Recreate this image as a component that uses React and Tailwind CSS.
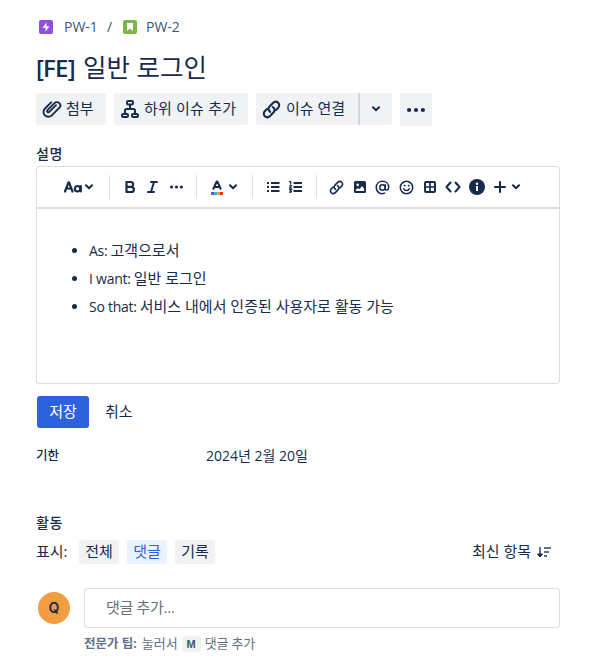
import React from "react";

const Attachment = () => (
  <svg width="20" height="20" viewBox="0 0 20 20" fill="none" stroke="currentColor" strokeWidth="1.900" strokeLinecap="round">
    <path d="M14 6.200l-6.700 6.700c-.5.500-1.300.500-1.800.100s-.5-1.300 0-1.800l7-7c1.400-1.400 3.500-1.400 4.800-.1s1.300 3.400-.1 4.800l-7.400 7.400c-2 2-5 2-6.900.1s-1.900-4.900.1-6.900l6.200-6.200" />
  </svg>
);

const ChildIssues = () => (
  <svg width="18" height="18" viewBox="0 0 18 18" fill="none" stroke="currentColor" strokeWidth="2">
    <rect x="6" y="1" width="6" height="3.500" rx="1.200" />
    <rect x="1" y="14" width="6" height="3" rx="1.200" />
    <rect x="11" y="14" width="6" height="3" rx="1.200" />
    <path d="M9 4.500V9M4 14v-3.500Q4 9 5.500 9h7q1.500 0 1.500 1.500V14" />
  </svg>
);

const LinkIcon = ({ size = 19, stroke = 2 }) => (
  <svg width={size} height={size} viewBox="0 0 18 18" fill="none" stroke="currentColor" strokeWidth={stroke} strokeLinecap="round">
    <path d="M7.700 11.200c-1.900-1.400-2-3.600-.5-5.100l3.200-3.200c1.500-1.500 3.500-1.500 4.900-.2s1.300 3.400-.1 4.800l-2 2" />
    <path d="M10.300 6.800c1.900 1.400 2 3.600.5 5.100l-3.200 3.200c-1.500 1.500-3.500 1.500-4.900.2s-1.300-3.400.1-4.800l2-2" />
  </svg>
);

const Chevron = () => (
  <svg width="10" height="6" viewBox="0 0 10 6" fill="none" stroke="currentColor" strokeWidth="2" strokeLinecap="round" strokeLinejoin="round">
    <path d="M2 1.300l3 3 3-3" />
  </svg>
);

const Dots = ({ width, r }) => (
  <svg width={width} height="6" viewBox={`0 0 ${width} 6`} fill="currentColor">
    <circle cx={r} cy="3" r={r} />
    <circle cx={width / 2} cy="3" r={r} />
    <circle cx={width - r} cy="3" r={r} />
  </svg>
);

const Divider = () => <div className="h-6 w-px shrink-0 bg-[#dcdfe4]" />;

const Toolbar = () => (
  <div className="flex h-[42px] items-center border-b-2 border-[#dddee1] pl-[26px] text-[#172b4d]">
    <span className="flex w-[46px] items-center">
      <svg width="21" height="14" viewBox="0 0 21 14" fill="none" stroke="currentColor" strokeWidth="2.200" strokeLinecap="round" strokeLinejoin="round">
        <path d="M2 11.500l3.500-9.200h.5l3.500 9.200M3.300 8.500h5" />
        <circle cx="14.500" cy="8.700" r="2.700" />
        <path d="M17.800 6v5.500" />
      </svg>
      <Chevron />
    </span>
    <Divider />
    <svg className="ml-[14px]" width="12" height="14" viewBox="0 0 12 14" fill="none" stroke="currentColor" strokeWidth="2.200" strokeLinejoin="round">
      <path d="M2.500 2h4.200c3.200 0 3.200 4.800 0 4.800H2.500zM2.500 6.800h4.700c3.600 0 3.600 5.200 0 5.200H2.500z" />
    </svg>
    <svg className="ml-[11px]" width="11" height="14" viewBox="0 0 11 14" fill="none" stroke="currentColor" strokeWidth="2" strokeLinecap="round">
      <path d="M4 2h6M1 12h6M7 2L4 12" />
    </svg>
    <span className="ml-[12px] w-[26px]">
      <Dots width={13} r={1.6} />
    </span>
    <Divider />
    <svg className="ml-[14px]" width="12" height="15" viewBox="0 0 12 15" fill="none">
      <path d="M2 9.500L5.700 1.500h.6L10 9.500M3.200 7.100h5.600" stroke="#172b4d" strokeWidth="2" strokeLinejoin="round" />
      <path d="M0 12h3v3H1q-1 0-1-1z" fill="#6554c0" />
      <path d="M3 12h3v3H3z" fill="#2abfd5" />
      <path d="M6 12h3v3H6z" fill="#ff991f" />
      <path d="M9 12h3v2q0 1-1 1H9z" fill="#de350b" />
    </svg>
    <span className="ml-[5px] w-[24px]">
      <Chevron />
    </span>
    <Divider />
    <svg className="ml-[14px]" width="13" height="12" viewBox="0 0 13 12" fill="currentColor">
      <path d="M0 1h2v2H0zM0 5h2v2H0zM0 9h2v2H0zM4 1h8.500v2H4zM4 5h8.500v2H4zM4 9h8.500v2H4z" />
    </svg>
    <svg className="ml-[9px]" width="13" height="12" viewBox="0 0 13 12" fill="none" stroke="currentColor">
      <path d="M4.500 2H13M4.500 6H13M4.500 10H13" strokeWidth="2" />
      <path d="M0 .700h1.700v3M.200 4.800h2.200L.400 7.200h2.400M.200 8.700h2.300L1.200 9.900c2 0 1.500 1.600-.9 1.600" strokeWidth="1.200" />
    </svg>
    <span className="w-[14px]" />
    <Divider />
    <span className="ml-[12px]">
      <LinkIcon size={15} stroke={2} />
    </span>
    <svg className="ml-[10px]" width="12" height="12" viewBox="0 0 13 12" preserveAspectRatio="none">
      <rect width="13" height="12" rx="1.500" fill="currentColor" />
      <circle cx="4" cy="3.800" r="1.400" fill="white" />
      <path d="M2 10V8.800L4.200 7l1.700 1.200L8.700 5 11 7.700V10z" fill="white" />
    </svg>
    <svg className="ml-[9px]" width="15" height="15" viewBox="0 0 15 15" fill="none" stroke="currentColor" strokeWidth="1.500" strokeLinecap="round">
      <circle cx="7.500" cy="7.500" r="2.700" />
      <path d="M10.200 4.800v3.900c0 2 3.500 1.800 3.500-1.200 0-8.200-12.400-8.200-12.400 0 0 5.300 4.700 7.100 8.300 5.600" />
    </svg>
    <svg className="ml-[9px]" width="15" height="15" viewBox="0 0 15 15" fill="none" stroke="currentColor" strokeWidth="1.500" strokeLinecap="round">
      <circle cx="7.500" cy="7.500" r="6.200" />
      <circle cx="5.400" cy="5.700" r=".5" strokeWidth="1" />
      <circle cx="9.600" cy="5.700" r=".5" strokeWidth="1" />
      <path d="M4.700 8.800c1 2.300 4.600 2.300 5.600 0" />
    </svg>
    <svg className="ml-[10px]" width="12" height="12" viewBox="0 0 12 12" fill="none" stroke="currentColor" strokeWidth="2">
      <rect x="1" y="1" width="10" height="10" rx="1" />
      <path d="M6 1v10M1 6h10" strokeWidth="1.700" />
    </svg>
    <svg className="ml-[9px]" width="16" height="12" viewBox="0 0 16 12" fill="none" stroke="currentColor" strokeWidth="2" strokeLinecap="round" strokeLinejoin="round">
      <path d="M5.500 1.500L1.500 6l4 4.500M10.500 1.500l4 4.500-4 4.500" />
    </svg>
    <svg className="ml-[8px]" width="16" height="16" viewBox="0 0 16 16">
      <circle cx="8" cy="8" r="8" fill="currentColor" />
      <circle cx="8" cy="4.700" r="1.200" fill="white" />
      <path d="M7 7h2v5H7z" fill="white" />
    </svg>
    <svg className="ml-[9px]" width="12" height="12" viewBox="0 0 12 12" fill="none" stroke="currentColor" strokeWidth="2" strokeLinecap="round">
      <path d="M6 1v10M1 6h10" />
    </svg>
    <span className="ml-[5px]">
      <Chevron />
    </span>
  </div>
);

const stories = [
  { label: "As:", text: "고객으로서" },
  { label: "I want:", text: "일반 로그인" },
  { label: "So that:", text: "서비스 내에서 인증된 사용자로 활동 가능" },
];

const App = () => {
  return (
    <div className="h-[666px] w-[605px] overflow-hidden bg-white pl-9 font-['Open_Sans','Noto_Sans_CJK_KR',sans-serif] text-[15px] text-[#172b4d]">
      <nav className="flex h-4 items-center pl-[3px] mt-[19px] text-sm text-[#44546f]">
        <svg width="14" height="14" viewBox="0 0 14 14">
          <rect width="14" height="14" rx="2" fill="#904ee2" />
          <path d="M7.500 2.500L3.500 7.800h3v3.700l4-5.300h-3z" fill="white" />
        </svg>
        <span className="ml-[11px] w-[43px] whitespace-nowrap">PW-1</span>
        <span className="w-[16px]">/</span>
        <svg width="14" height="14" viewBox="0 0 14 14">
          <rect width="14" height="14" rx="2" fill="#7ab648" />
          <path d="M4 3h6v8L7 8.600 4 11z" fill="white" />
        </svg>
        <span className="ml-[9px]">PW-2</span>
      </nav>

      <h1 className="mt-[14px] flex h-9 items-baseline whitespace-nowrap text-[25.5px] leading-9">
        <span className="w-[47px] text-2xl leading-9 font-semibold tracking-[-0.8px]">[FE]</span>
        <span>일반 로그인</span>
      </h1>

      <div className="mt-[8px] flex h-8 gap-2 whitespace-nowrap">
        <button className="flex h-8 w-[70px] items-center gap-1 rounded-[3px] bg-[#f1f2f4] pl-[6px]">
          <Attachment />
          <span className="pb-[2px]">첨부</span>
        </button>
        <button className="flex h-8 w-[134px] items-center gap-[5px] rounded-[3px] bg-[#f1f2f4] pl-[7px] tracking-[0.2px]">
          <ChildIssues />
          <span className="pb-[2px]">하위 이슈 추가</span>
        </button>
        <div className="flex h-8 w-[136px] rounded-[3px] bg-[#f1f2f4]">
          <button className="flex w-[102px] items-center gap-[5px] pl-[6px]">
            <LinkIcon />
            <span className="pb-[2px]">이슈 연결</span>
          </button>
          <button className="flex w-[34px] items-center justify-center border-l-2 border-[#d2d5db]">
            <Chevron />
          </button>
        </div>
        <button className="flex h-[33px] w-8 items-center justify-center rounded-[3px] bg-[#f1f2f4]">
          <Dots width={18} r={2.1} />
        </button>
      </div>

      <h2 className="mt-[18px] h-[23px] text-sm font-medium leading-[21px] tracking-[0.5px]">설명</h2>
      <section className="h-[218px] w-[524px] rounded-[3px] border border-[#dddee1]">
        <Toolbar />
        <ul className="mt-[27px] pl-[52px]">
          {stories.map((story) => (
            <li key={story.label} className="relative flex h-7 items-baseline gap-[3px] whitespace-nowrap leading-7">
              <span className="absolute top-[12px] -left-[17px] size-[5px] rounded-full bg-[#172b4d]" />
              <span className="text-sm leading-7 tracking-[-0.25px]">{story.label}</span>
              <span>{story.text}</span>
            </li>
          ))}
        </ul>
      </section>

      <div className="mt-3 flex h-8 items-center pl-px">
        <button className="h-8 w-[52px] rounded-[3px] bg-[#2c63dc] pb-[2px] text-white">저장</button>
        <button className="ml-[16px] pb-[2px]">취소</button>
      </div>

      <div className="mt-[18px] flex h-5 items-center">
        <span className="w-[170px] text-[12.5px] font-medium">기한</span>
        <span className="text-sm">2024년 2월 20일</span>
      </div>

      <h2 className="mt-[47px] h-5 text-sm font-medium leading-5 tracking-[0.5px]">활동</h2>
      <div className="mt-[7px] flex h-6 w-[524px] items-center leading-[22px]">
        <span className="w-[43px] pb-[2px]">표시:</span>
        <button className="h-6 w-10 rounded-[3px] bg-[#f1f2f4] pb-[2px]">전체</button>
        <button className="ml-2 h-6 w-10 rounded-[3px] bg-[#e9f2ff] pb-[2px] text-[#2c63dc]">댓글</button>
        <button className="ml-2 h-6 w-10 rounded-[3px] bg-[#f1f2f4] pb-[2px]">기록</button>
        <button className="mr-[9px] ml-auto flex items-center gap-[6px]">
          <span className="pb-[2px]">최신 항목</span>
          <svg width="14" height="12" viewBox="0 0 14 12" fill="none" stroke="#626f86" strokeWidth="2">
            <path d="M3 1v8" />
            <path d="M.500 8L3 11l2.500-3z" fill="#172b4d" stroke="#172b4d" strokeWidth="1" />
            <path d="M7 2h7M7 6h5M7 10h3" />
          </svg>
        </button>
      </div>

      <div className="mt-6 flex w-[524px]">
        <div className="mt-1 ml-[2px] flex size-8 items-center justify-center rounded-full bg-[#f29d41] font-['Inter',sans-serif] text-sm font-semibold">Q</div>
        <div className="ml-[14px] flex-1">
          <div className="flex h-10 items-center rounded-[3px] border border-[#dddee1] pb-[2px] pl-[21px] tracking-[-0.3px] text-[#6b6e76]">댓글 추가...</div>
          <p className="mt-[7px] flex h-[18px] items-center text-[13px] text-[#626f86]">
            <b className="text-[12.5px] font-bold">전문가 팁:</b>
            <span className="ml-[5px]">눌러서</span>
            <kbd className="mx-[4px] flex h-4 w-[19px] items-center justify-center rounded-[3px] bg-[#f1f2f4] font-['Liberation_Sans',sans-serif] text-[11px] font-bold text-[#44546f]">M</kbd>
            <span className="tracking-[-0.2px]">댓글 추가</span>
          </p>
        </div>
      </div>
    </div>
  );
};

export default App;
